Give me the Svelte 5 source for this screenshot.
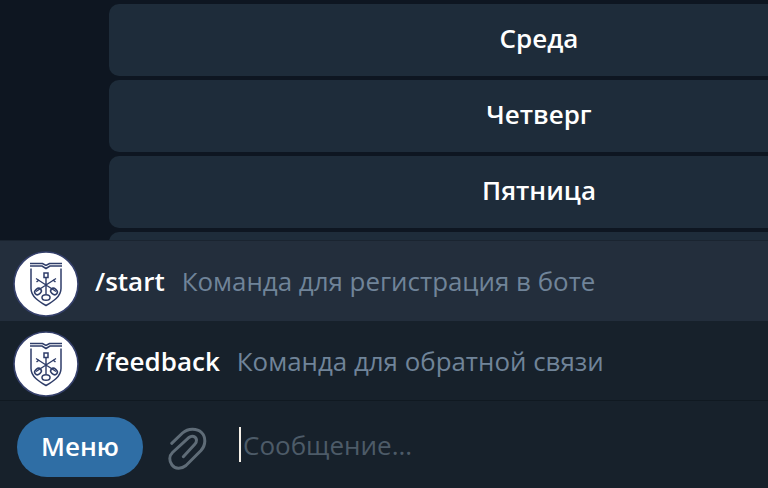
<script>
  const days = ['Среда', 'Четверг', 'Пятница', ''];
  const commands = [
    { name: '/start', text: 'Команда для регистрация в боте', active: true },
    { name: '/feedback', text: 'Команда для обратной связи', active: false }
  ];
</script>

<div class="root">
  <div class="chat">
    {#each days as d}
      <div class="kb">{d}</div>
    {/each}
  </div>
  <div class="panel">
    {#each commands as c}
      <div class="row" class:active={c.active}>
        <svg class="ava" viewBox="0 0 66 66" width="66" height="66">
          <circle cx="33" cy="33" r="32" fill="#fff" stroke="#35406b" stroke-width="1.6" />
          <g fill="none" stroke="#2f3d69" stroke-width="1.5">
            <path d="M17 12.500h12.500l3.500 2 3.500-2H49" />
            <path d="M17 15h12l4 2.500 4-2.500h12" />
            <path d="M18 17.500v20c0 8 8 13 15 17 7-4 15-9 15-17v-20" />
            <path d="M33 27v16M23 27.500l20 13M43 27.500l-20 13" stroke-width="1.400" />
            <rect x="31" y="22" width="4" height="4.500" />
            <ellipse cx="33" cy="46.500" rx="4" ry="2.800" />
            <ellipse cx="25" cy="40.500" rx="3.600" ry="2.800" transform="rotate(-40 25 40.500)" />
            <ellipse cx="41" cy="40.500" rx="3.600" ry="2.800" transform="rotate(40 41 40.500)" />
            <path d="M23.500 31l2.500-2M42.500 31 40 29" />
          </g>
        </svg>
        <span class="name">{c.name}</span>
        <span class="desc">{c.text}</span>
      </div>
    {/each}
  </div>
  <div class="bar">
    <button class="menu">Меню</button>
    <svg class="clip" viewBox="0 0 40 44" width="40" height="44">
      <path d="M3.700 16.300 14.500 6C20 1 29 1 33.500 5.500 38 10 38 18 33 23.500L18 38.500C13 42.500 7 42 4 38 1 34 1 29 4.500 25.500L21 10.500C24 8 28 9.500 28.500 13 28.500 15 28 16 27 17L15.300 29.700" fill="none" stroke="#5f6c77" stroke-width="3" stroke-linecap="round" />
    </svg>
    <div class="input"><span class="caret"></span><span class="ph">Сообщение...</span></div>
  </div>
</div>

<style>
  :global(body) { margin: 0; background: #0e1621; }
  .root {
    width: 768px; height: 488px; overflow: hidden;
    display: flex; flex-direction: column;
    background: #0e1621;
    font-family: "Open Sans", "Noto Sans", sans-serif;
  }
  .chat {
    height: 240px; flex: none; overflow: hidden;
    box-sizing: border-box; padding: 4px 0 0 109px;
    display: flex; flex-direction: column; gap: 4px;
  }
  .kb {
    flex: none; width: 860px; height: 72px; border-radius: 10px;
    box-sizing: border-box; padding-bottom: 4px;
    background: #1e2c3a; color: #fff;
    font-size: 26px; font-weight: 600;
    display: flex; align-items: center; justify-content: center;
  }
  .panel {
    flex: none; border-top: 1px solid #1a2430;
    display: flex; flex-direction: column;
  }
  .row {
    height: 80px; box-sizing: border-box; flex: none; display: flex; align-items: center;
    padding-left: 13px; background: #17212b;
  }
  .row:last-child { border-bottom: 1px solid #101921; }
  .row.active { background: #232e3c; }
  .ava { flex: none; margin: 6px 16px 0 0; }
  .name { color: #fff; font-size: 26px; font-weight: 600; margin-right: 17px; }
  .desc { color: #708499; font-size: 25.900px; white-space: nowrap; }
  .bar {
    flex: 1; background: #17212b;
    display: flex; align-items: center; padding: 4px 0 0 17px;
  }
  .menu {
    width: 126px; height: 60px; border: 0; border-radius: 30px; padding: 0 0 2px;
    margin: 0 25px 0 0;
    background: #2f6ea5; color: #fff; font: 600 26px "Open Sans", sans-serif;
    flex: none;
  }
  .clip { flex: none; margin: 4px 31px 0 0; }
  .input { display: flex; align-items: center; gap: 2px; margin-top: -4px; }
  .caret { width: 2px; height: 35px; background: #f5f0e8; }
  .ph { color: #4d5b68; font-size: 26px; }
</style>
